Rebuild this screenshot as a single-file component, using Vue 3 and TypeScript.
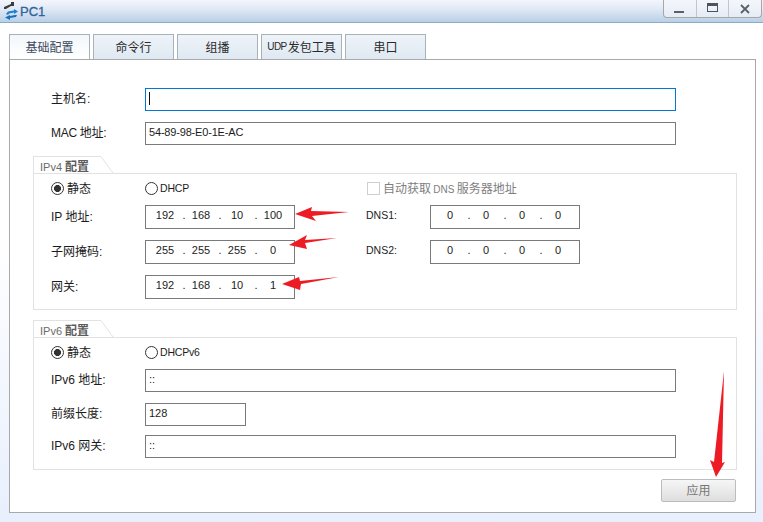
<script setup lang="ts">
import { ref } from 'vue'

interface IpRow {
  label: string
  octets: string[]
  dnsLabel?: string
}

const tabs = [
  { latin: '', text: '基础配置' },
  { latin: '', text: '命令行' },
  { latin: '', text: '组播' },
  { latin: 'UDP', text: '发包工具' },
  { latin: '', text: '串口' }
]
const activeTab = ref(0)

const ipv4Rows: IpRow[] = [
  { label: 'IP 地址:', octets: ['192', '168', '10', '100'], dnsLabel: 'DNS1:' },
  { label: '子网掩码:', octets: ['255', '255', '255', '0'], dnsLabel: 'DNS2:' },
  { label: '网关:', octets: ['192', '168', '10', '1'] }
]
const dnsOctets = ['0', '0', '0', '0']

// 红色标注箭头
const arrows = [
  '349,212 312,216 316,221 295,214 312,207 311,211',
  '337,238 305,243 307,249 289,245 307,235 305,240',
  '339,277 301,284 300,290 282,284 299,277 300,281',
  '724,371 722,463 725,462 716,477 710,460 714,462'
]
</script>

<template>
  <div class="window">
    <header class="titlebar">
      <svg class="app-icon" width="17" height="20" viewBox="0 0 17 20">
        <path d="M2 6 L9 3 L9 1 L12 1 L12 5 L9 5 L4 8 L2 8 Z" fill="#3c3c3c" />
        <path d="M4 13 L6 10.500 L12 9.500 L12 8 L16 10.500 L12 13 L12 11.500 L7 12.500 L6 14 Z" fill="#1f7fd0" />
        <path d="M15 14 L14 16 L8 17 L8 19 L3 16.500 L8 14 L8 15 L13 14 Z" fill="#1a6fbc" />
      </svg>
      <span class="title">PC1</span>
      <div class="win-controls">
        <button class="win-btn"><svg width="11" height="11" viewBox="0 0 11 11"><rect x="0" y="8" width="10" height="2" fill="#5a6069" /></svg></button>
        <button class="win-btn"><svg width="12" height="11" viewBox="0 0 12 11"><rect x="0.500" y="0.500" width="10" height="8" fill="none" stroke="#4e545d" /><rect x="0" y="0" width="11" height="3" fill="#4e545d" /></svg></button>
        <button class="win-btn"><svg width="10" height="10" viewBox="0 0 10 10"><path d="M1 1 L9 9 M9 1 L1 9" stroke="#5a6069" stroke-width="1.800" /></svg></button>
      </div>
    </header>

    <div class="content">
      <nav class="tabs">
        <div
          v-for="(tab, i) in tabs"
          :key="tab.text"
          class="tab"
          :class="{ 'tab--active': i === activeTab }"
        ><span v-if="tab.latin" class="tab-latin">{{ tab.latin }}</span>{{ tab.text }}</div>
      </nav>

      <main class="panel">
        <div class="form-row">
          <label class="label">主机名:</label>
          <div class="input input--focus"><span class="caret"></span></div>
        </div>
        <div class="form-row form-row--mac">
          <label class="label">MAC 地址:</label>
          <div class="input input--mac">54-89-98-E0-1E-AC</div>
        </div>

        <section class="group">
          <div class="group-head">
            <span class="group-title">IPv4 <b>配置</b></span>
            <svg class="group-notch" width="14" height="18" viewBox="0 0 14 18"><path d="M0 0.500 L1 0.500 L13 17" fill="none" stroke="#e2e2e2" /></svg>
          </div>
          <div class="group-body v4-body">
            <div class="mode-row">
              <span class="radio radio--on"></span>
              <span class="mode-static">静态</span>
              <span class="radio"></span>
              <span class="mode-dhcp">DHCP</span>
              <span class="checkbox"></span>
              <span class="auto-dns">自动获取 <span class="auto-dns-latin">DNS</span> 服务器地址</span>
            </div>
            <div v-for="row in ipv4Rows" :key="row.label" class="ip-row">
              <label class="label">{{ row.label }}</label>
              <div class="ip-box">
                <template v-for="(o, i) in row.octets" :key="i">
                  <span class="octet">{{ o }}</span>
                  <span v-if="i < 3" class="dot">.</span>
                </template>
              </div>
              <template v-if="row.dnsLabel">
                <label class="dns-label">{{ row.dnsLabel }}</label>
                <div class="ip-box">
                  <template v-for="(o, i) in dnsOctets" :key="i">
                    <span class="octet">{{ o }}</span>
                    <span v-if="i < 3" class="dot">.</span>
                  </template>
                </div>
              </template>
            </div>
          </div>
        </section>

        <section class="group group--v6">
          <div class="group-head">
            <span class="group-title">IPv6 <b>配置</b></span>
            <svg class="group-notch" width="14" height="18" viewBox="0 0 14 18"><path d="M0 0.500 L1 0.500 L13 17" fill="none" stroke="#e2e2e2" /></svg>
          </div>
          <div class="group-body v6-body">
            <div class="mode-row mode-row--v6">
              <span class="radio radio--on"></span>
              <span class="mode-static">静态</span>
              <span class="radio"></span>
              <span class="mode-dhcp">DHCPv6</span>
            </div>
            <div class="form-row">
              <label class="label">IPv6 地址:</label>
              <div class="input">::</div>
            </div>
            <div class="form-row">
              <label class="label">前缀长度:</label>
              <div class="input input--short">128</div>
            </div>
            <div class="form-row">
              <label class="label">IPv6 网关:</label>
              <div class="input">::</div>
            </div>
          </div>
        </section>

        <div class="footer">
          <button class="apply">应用</button>
        </div>
      </main>
    </div>

    <svg class="arrows" width="763" height="522" viewBox="0 0 763 522">
      <polygon v-for="a in arrows" :key="a" :points="a" fill="#ed1c24" />
    </svg>
  </div>
</template>

<style>
html, body {
  margin: 0;
  padding: 0;
}
</style>

<style scoped>
.window {
  position: relative;
  width: 763px;
  height: 522px;
  overflow: hidden;
  display: flex;
  flex-direction: column;
  background: linear-gradient(to bottom, #ffffff 0, #ffffff 45%, #e8effd 100%);
  font-family: "Liberation Sans", "Noto Sans CJK SC", sans-serif;
  font-size: 12px;
  color: #1c1c1c;
}

/* 标题栏 */
.titlebar {
  position: relative;
  flex: none;
  box-sizing: border-box;
  height: 23px;
  display: flex;
  align-items: center;
  background: linear-gradient(to bottom, #f3f5fd 0, #e4ebf6 35%, #b9d0e7 100%);
  border-bottom: 1px solid #8fabc4;
}
.app-icon {
  margin-left: 2px;
  flex: none;
}
.title {
  margin-left: 1px;
  font-size: 13px;
  color: #2f639c;
  -webkit-text-stroke: 0.3px #2f639c;
}
.win-controls {
  position: absolute;
  top: 0;
  left: 663px;
  width: 99px;
  height: 18px;
  box-sizing: border-box;
  display: flex;
  border: 1px solid #a7a7a7;
  border-top: none;
  border-radius: 0 0 4px 4px;
  background: linear-gradient(to bottom, #f4f6fc, #e6ecf5);
}
.win-btn {
  flex: 1;
  padding: 0;
  border: none;
  background: none;
  display: flex;
  align-items: center;
  justify-content: center;
  border-left: 1px solid #c2c6cc;
}
.win-btn:first-child {
  border-left: none;
}

/* 内容 */
.content {
  flex: 1;
  min-height: 0;
  padding: 11px 7px 9px 9px;
  display: flex;
  flex-direction: column;
}
.tabs {
  flex: none;
  height: 25px;
  display: flex;
  gap: 3px;
}
.tab {
  box-sizing: border-box;
  width: 81px;
  height: 25px;
  padding-bottom: 2px;
  border: 1px solid #a8b2ba;
  border-bottom: none;
  background: linear-gradient(to bottom, #eef3f8, #dfe9f3);
  display: flex;
  align-items: center;
  justify-content: center;
  color: #2a2a2a;
  font-size: 12px;
}
.tab--active {
  background: linear-gradient(to bottom, #f3f7fb, #ffffff);
  color: #3c4a5c;
}
.tab-latin {
  font-size: 10px;
  letter-spacing: -0.5px;
  margin-right: 1px;
}
.panel {
  flex: 1;
  min-height: 0;
  box-sizing: border-box;
  padding: 28px 18px 0 23px;
  border: 1px solid #a9a9a9;
  background: #ffffff;
}

.form-row {
  display: flex;
  align-items: center;
  height: 23px;
  padding-left: 18px;
}
.form-row--mac {
  margin-top: 11px;
}
.form-row--mac .label {
  letter-spacing: -0.3px;
}
.label {
  flex: none;
  box-sizing: border-box;
  width: 94px;
  padding-bottom: 4px;
}
.input {
  box-sizing: border-box;
  width: 531px;
  height: 23px;
  padding: 0 3px;
  line-height: 18px;
  border: 1px solid #7a7a7a;
  font-size: 11px;
}
.input--focus {
  display: flex;
  align-items: center;
  border-color: #0078d7;
}
.input--mac {
  letter-spacing: -0.18px;
}
.input--short {
  width: 101px;
}
.caret {
  width: 1px;
  height: 13px;
  margin-bottom: 2px;
  background: #111;
}

/* 分组 */
.group {
  margin-top: 11px;
}
.group--v6 {
  margin-top: 10px;
}
.group-head {
  position: relative;
  height: 17px;
  padding: 3px 0 0 6px;
  box-sizing: border-box;
  border-left: 1px solid #e2e2e2;
  border-top: 1px solid #e2e2e2;
  width: 67px;
}
.group-title {
  display: block;
  line-height: 15px;
  font-size: 11px;
  color: #6b6b6b;
  white-space: nowrap;
}
.group-title b {
  font-size: 12px;
  font-weight: bold;
  color: #5c5c5c;
}
.group-notch {
  position: absolute;
  left: 66px;
  top: -1px;
}
.group-body {
  box-sizing: border-box;
  border: 1px solid #e2e2e2;
}
.v4-body {
  height: 137px;
  padding-top: 4px;
}
.v6-body {
  height: 133px;
}
.v6-body .form-row {
  margin-top: 11px;
  padding-left: 17px;
}
.v6-body .form-row:nth-child(2) {
  margin-top: 0;
}
.v6-body .form-row:nth-child(4) {
  margin-top: 9px;
}
.mode-row {
  display: flex;
  align-items: center;
  box-sizing: border-box;
  height: 20px;
  padding-left: 17px;
}
.mode-row--v6 {
  height: 31px;
  padding-bottom: 3px;
}
.radio {
  flex: none;
  box-sizing: border-box;
  width: 13px;
  height: 13px;
  border: 1px solid #333;
  border-radius: 50%;
  background: #fff;
}
.radio--on {
  background: radial-gradient(circle, #333 0, #333 3.200px, #fff 3.800px);
}
.mode-static {
  box-sizing: border-box;
  width: 78px;
  margin-left: 3px;
  padding-bottom: 2px;
  font-size: 12px;
}
.mode-dhcp {
  margin-left: 2px;
  width: 162px;
  font-size: 10.500px;
  letter-spacing: -0.2px;
}
.checkbox {
  flex: none;
  box-sizing: border-box;
  width: 13px;
  height: 13px;
  margin-left: 45px;
  border: 1px solid #cfcfcf;
}
.auto-dns {
  margin-left: 3px;
  padding-bottom: 2px;
  color: #7e7e7e;
  word-spacing: -1px;
}
.auto-dns-latin {
  font-size: 10px;
}
.ip-row {
  display: flex;
  align-items: center;
  height: 24px;
  margin-top: 11px;
  padding-left: 17px;
}
.ip-row:nth-child(2) {
  margin-top: 7px;
}
.ip-box {
  flex: none;
  box-sizing: border-box;
  width: 150px;
  height: 24px;
  padding: 0 0 4px 4px;
  display: flex;
  align-items: center;
  border: 1px solid #7a7a7a;
  font-size: 11px;
}
.octet {
  width: 30px;
  text-align: center;
}
.dot {
  box-sizing: border-box;
  width: 6px;
  padding-left: 2px;
  text-align: center;
}
.dns-label {
  flex: none;
  box-sizing: border-box;
  width: 64px;
  margin-left: 71px;
  padding-bottom: 4px;
  font-size: 10.500px;
}

.footer {
  display: flex;
  justify-content: flex-end;
  margin-top: 9px;
  padding-right: 1px;
}
.apply {
  box-sizing: border-box;
  width: 75px;
  height: 23px;
  padding: 0 0 2px;
  border: 1px solid #bcbcbc;
  border-radius: 2px;
  background: linear-gradient(to bottom, #f6f6f6, #dedede);
  font-family: inherit;
  font-size: 12px;
  color: #777;
}
.arrows {
  position: absolute;
  left: 0;
  top: 0;
  pointer-events: none;
}
</style>
